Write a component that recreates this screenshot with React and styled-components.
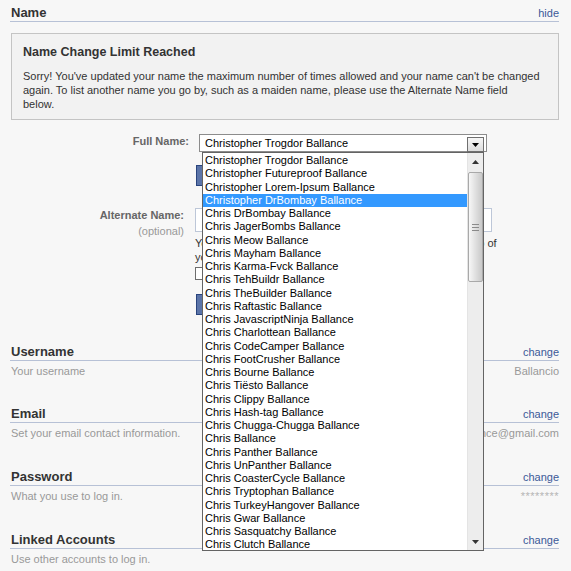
import styled, { createGlobalStyle } from 'styled-components';

const GlobalStyle = createGlobalStyle`
  html, body {
    margin: 0;
    padding: 0;
    background: #f7f7f7;
  }
  body {
    font-family: "Liberation Sans", Arial, sans-serif;
    font-size: 11px;
    color: #333333;
  }
  * {
    box-sizing: border-box;
  }
`;

const Page = styled.div`
  width: 559px;
  padding: 5px 0 0 10px;
`;

const Section = styled.div`
  margin-top: ${(p) => p.$top || 0}px;
`;

const SectionHeader = styled.div`
  display: flex;
  align-items: center;
  justify-content: space-between;
  height: 17px;
  line-height: 16px;
  border-bottom: 1px solid #b7c1d6;
`;

const SectionTitle = styled.h3`
  margin: 0 0 0 1px;
  font-size: 13px;
  font-weight: 700;
  color: #333333;
`;

const HeaderLink = styled.a`
  font-size: 11px;
  color: #3b5998;
  text-decoration: none;
  cursor: pointer;
`;

const SectionInfo = styled.div`
  display: flex;
  justify-content: space-between;
  padding-top: 3px;
  line-height: 14px;
  color: #999999;
  font-size: 11px;
`;

const Description = styled.span`
  margin-left: 1px;
`;

const CurrentValue = styled.span`
  color: ${(p) => (p.$masked ? '#b5b5b5' : '#999999')};
  letter-spacing: ${(p) => (p.$masked ? '0.5px' : '0')};
`;

const Notice = styled.div`
  margin: 11px 0 0 1px;
  padding: 10px 10px 8px 11px;
  background: #f2f2f2;
  border: 1px solid #c4c4c4;
`;

const NoticeTitle = styled.h4`
  margin: 0;
  font-size: 12.5px;
  line-height: 16px;
  font-weight: 700;
  color: #333333;
`;

const NoticeText = styled.p`
  margin: 9px 0 0;
  font-size: 11px;
  line-height: 14px;
  color: #333333;
`;

const Form = styled.div`
  display: grid;
  grid-template-columns: 185px 1fr;
  margin-top: 14px;
`;

const LabelCell = styled.div`
  text-align: right;
  padding-right: ${(p) => p.$pad}px;
  padding-top: ${(p) => p.$top || 0}px;
  line-height: 14px;
`;

const FieldLabel = styled.label`
  display: block;
  font-weight: 700;
  color: #666666;
  font-size: 11px;
`;

const Optional = styled.span`
  display: block;
  margin-top: 2px;
  color: #999999;
  font-size: 11px;
`;

const FieldCell = styled.div`
  display: flex;
  flex-direction: column;
  align-items: flex-start;
  padding-top: ${(p) => p.$top || 0}px;
`;

const SelectWrap = styled.div`
  position: relative;
  margin-left: 4px;
  width: 288px;
  height: 18px;
  background: #ffffff;
  border: 1px solid #8c8c8c;
  z-index: 5;
`;

const SelectValue = styled.div`
  padding-left: 5px;
  line-height: 17px;
  font-size: 11px;
  color: #000000;
`;

const SelectArrow = styled.div`
  position: absolute;
  top: 2px;
  right: 2px;
  width: 17px;
  height: 15px;
  border: 1px solid #6f6f6f;
  background: linear-gradient(#f6f6f6, #dcdcdc);
  display: flex;
  align-items: center;
  justify-content: center;
`;

const OptionList = styled.div`
  position: absolute;
  top: 17px;
  left: 2px;
  width: 282px;
  height: 399px;
  display: flex;
  background: #ffffff;
  border: 1px solid #646464;
`;

const Options = styled.div`
  flex: 1;
  overflow: hidden;
  padding-top: 1px;
`;

const OptionItem = styled.div`
  height: 13.25px;
  line-height: 13.25px;
  padding-left: 2px;
  font-size: 11px;
  white-space: nowrap;
  color: ${(p) => (p.$selected ? '#ffffff' : '#000000')};
  background: ${(p) => (p.$selected ? '#3399ff' : 'transparent')};
`;

const Scrollbar = styled.div`
  width: 16px;
  display: flex;
  flex-direction: column;
  background: #ededed;
  border-left: 1px solid #e4e4e4;
`;

const ScrollButton = styled.div`
  height: ${(p) => p.$h}px;
  display: flex;
  align-items: center;
  justify-content: center;
`;

const ScrollTrack = styled.div`
  flex: 1;
  padding: 1px 0 0 0;
`;

const ScrollThumb = styled.div`
  height: 110px;
  border: 1px solid #a9a9a9;
  border-radius: 2px;
  background: linear-gradient(90deg, #f7f7f7, #e2e2e2 45%, #c9c9c9);
  display: flex;
  align-items: center;
  justify-content: center;
`;

const Grip = styled.div`
  width: 7px;
  height: 7px;
  background: repeating-linear-gradient(#8a8a8a 0 1px, transparent 1px 3px);
`;

const BlueButton = styled.button`
  margin-top: ${(p) => p.$top}px;
  margin-left: 1px;
  height: ${(p) => p.$h}px;
  padding: 0 8px;
  background: #5b74a8;
  border: 1px solid #29447e;
  color: #ffffff;
  font-family: inherit;
  font-weight: 700;
  font-size: 11px;
`;

const TextInput = styled.input`
  width: 297px;
  height: 24px;
  border: 1px solid #bdc7d8;
  background: #ffffff;
  font-family: inherit;
  font-size: 11px;
`;

const Hint = styled.div`
  margin-top: 4px;
  line-height: 14px;
  color: #333333;
  white-space: nowrap;
`;

const CheckRow = styled.label`
  display: flex;
  align-items: center;
  gap: 4px;
  margin-top: 2px;
  line-height: 14px;
  white-space: nowrap;
`;

const CheckBox = styled.span`
  width: 13px;
  height: 13px;
  border: 1px solid #6d6d6d;
  background: #ffffff;
`;

const names = [
  'Christopher Trogdor Ballance',
  'Christopher Futureproof Ballance',
  'Christopher Lorem-Ipsum Ballance',
  'Christopher DrBombay Ballance',
  'Chris DrBombay Ballance',
  'Chris JagerBombs Ballance',
  'Chris Meow Ballance',
  'Chris Mayham Ballance',
  'Chris Karma-Fvck Ballance',
  'Chris TehBuildr Ballance',
  'Chris TheBuilder Ballance',
  'Chris Raftastic Ballance',
  'Chris JavascriptNinja Ballance',
  'Chris Charlottean Ballance',
  'Chris CodeCamper Ballance',
  'Chris FootCrusher Ballance',
  'Chris Bourne Ballance',
  'Chris Tiësto Ballance',
  'Chris Clippy Ballance',
  'Chris Hash-tag Ballance',
  'Chris Chugga-Chugga Ballance',
  'Chris Ballance',
  'Chris Panther Ballance',
  'Chris UnPanther Ballance',
  'Chris CoasterCycle Ballance',
  'Chris Tryptophan Ballance',
  'Chris TurkeyHangover Ballance',
  'Chris Gwar Ballance',
  'Chris Sasquatchy Ballance',
  'Chris Clutch Ballance',
];

const sections = [
  { title: 'Username', info: 'Your username', value: 'Ballancio', top: 29 },
  {
    title: 'Email',
    info: 'Set your email contact information.',
    value: 'chrisballance@gmail.com',
    top: 28,
  },
  { title: 'Password', info: 'What you use to log in.', value: '********', masked: true, top: 29 },
  { title: 'Linked Accounts', info: 'Use other accounts to log in.', top: 29 },
];

function Triangle({ down, size = 7, color = '#000' }) {
  const h = Math.ceil(size / 2);
  return (
    <svg width={size} height={h} viewBox={`0 0 ${size} ${h}`}>
      <polygon
        points={down ? `0,0 ${size},0 ${size / 2},${h}` : `0,${h} ${size},${h} ${size / 2},0`}
        fill={color}
      />
    </svg>
  );
}

export default function App() {
  return (
    <>
      <GlobalStyle />
      <Page>
        <Section>
          <SectionHeader>
            <SectionTitle>Name</SectionTitle>
            <HeaderLink>hide</HeaderLink>
          </SectionHeader>
        </Section>

        <Notice>
          <NoticeTitle>Name Change Limit Reached</NoticeTitle>
          <NoticeText>
            Sorry! You've updated your name the maximum number of times allowed and your name
            can't be changed
            <br />
            again. To list another name you go by, such as a maiden name, please use the
            Alternate Name field
            <br />
            below.
          </NoticeText>
        </Notice>

        <Form>
          <LabelCell $pad={6}>
            <FieldLabel>Full Name:</FieldLabel>
          </LabelCell>
          <FieldCell>
            <SelectWrap>
              <SelectValue>{names[0]}</SelectValue>
              <SelectArrow>
                <Triangle down size={7} />
              </SelectArrow>
              <OptionList>
                <Options>
                  {names.map((n, i) => (
                    <OptionItem key={n} $selected={i === 3}>
                      {n}
                    </OptionItem>
                  ))}
                </Options>
                <Scrollbar>
                  <ScrollButton $h={18}>
                    <Triangle size={7} color="#333" />
                  </ScrollButton>
                  <ScrollTrack>
                    <ScrollThumb>
                      <Grip />
                    </ScrollThumb>
                  </ScrollTrack>
                  <ScrollButton $h={16}>
                    <Triangle down size={7} color="#333" />
                  </ScrollButton>
                </Scrollbar>
              </OptionList>
            </SelectWrap>
            <BlueButton $top={13} $h={21}>
              Review Change
            </BlueButton>
          </FieldCell>

          <LabelCell $pad={11} $top={22}>
            <FieldLabel>Alternate Name:</FieldLabel>
            <Optional>(optional)</Optional>
          </LabelCell>
          <FieldCell $top={22}>
            <TextInput type="text" />
            <Hint>
              Your alternate name will appear in search results and at top of
              <br />
              your profile.
            </Hint>
            <CheckRow>
              <CheckBox />
              Include this on my profile
            </CheckRow>
            <BlueButton $top={14} $h={21}>
              Save Changes
            </BlueButton>
          </FieldCell>
        </Form>

        {sections.map((s) => (
          <Section key={s.title} $top={s.top}>
            <SectionHeader>
              <SectionTitle>{s.title}</SectionTitle>
              <HeaderLink>change</HeaderLink>
            </SectionHeader>
            <SectionInfo>
              <Description>{s.info}</Description>
              {s.value && <CurrentValue $masked={s.masked}>{s.value}</CurrentValue>}
            </SectionInfo>
          </Section>
        ))}
      </Page>
    </>
  );
}
